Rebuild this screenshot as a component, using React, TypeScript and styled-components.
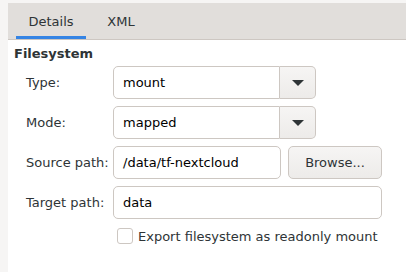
import React from 'react';
import styled, { createGlobalStyle } from 'styled-components';

const GlobalStyle = createGlobalStyle`
  html, body {
    margin: 0;
    padding: 0;
    background: #f6f5f4;
  }
  body {
    font-family: 'DejaVu Sans', 'Noto Sans', sans-serif;
    font-size: 13px;
    color: #2e3436;
  }
`;

const Window = styled.div`
  width: 406px;
  height: 272px;
  padding: 3px 0 0 8px;
  box-sizing: border-box;
  display: flex;
  flex-direction: column;
  overflow: hidden;
`;

const TabBar = styled.div`
  display: flex;
  height: 36px;
  padding-left: 8px;
  background: #e1dedb;
  border-bottom: 1px solid #cdc7c2;
  flex-shrink: 0;
`;

const Tab = styled.div<{ $active?: boolean }>`
  width: 70px;
  display: flex;
  align-items: center;
  justify-content: center;
  box-sizing: border-box;
  padding-top: ${(p) => (p.$active ? '3px' : '0')};
  border-bottom: ${(p) => (p.$active ? '3px solid #3584e4' : 'none')};
  color: #2e3436;
`;

const Page = styled.div`
  flex: 1;
  background: #ffffff;
  padding: 6px 0 0 6px;
`;

const SectionTitle = styled.div`
  font-weight: 700;
  line-height: 16px;
  margin-bottom: 4px;
`;

const Form = styled.div`
  display: grid;
  grid-template-columns: 87px 269px;
  row-gap: 7px;
  padding-left: 12px;
`;

const Label = styled.div`
  display: flex;
  align-items: center;
  height: 33px;
`;

const Field = styled.div`
  display: flex;
  gap: 7px;
`;

const Entry = styled.div<{ $width: number }>`
  width: ${(p) => p.$width}px;
  height: 33px;
  box-sizing: border-box;
  border: 1px solid #cdc7c2;
  border-radius: 5px;
  background: #fff;
  padding: 0 9px;
  display: flex;
  align-items: center;
  color: #000;
`;

const Combo = styled.div`
  width: 203px;
  height: 33px;
  display: flex;
`;

const ComboEntry = styled(Entry)`
  border-radius: 5px 0 0 5px;
`;

const ComboButton = styled.div`
  width: 36px;
  box-sizing: border-box;
  border: 1px solid #cdc7c2;
  border-left: none;
  border-radius: 0 5px 5px 0;
  background: linear-gradient(#f6f5f4, #edebe9);
  display: flex;
  align-items: center;
  justify-content: center;
`;

const Button = styled.div`
  width: 94px;
  height: 33px;
  box-sizing: border-box;
  border: 1px solid #cdc7c2;
  border-radius: 5px;
  background: linear-gradient(#f6f5f4, #edebe9);
  display: flex;
  align-items: center;
  justify-content: center;
  color: #2e3436;
`;

const CheckRow = styled.div`
  display: flex;
  align-items: center;
  gap: 5px;
  margin-top: 2px;
  padding-left: 4px;
`;

const CheckBox = styled.div`
  width: 16px;
  height: 16px;
  box-sizing: border-box;
  border: 1px solid #cdc7c2;
  border-radius: 3px;
  background: #fff;
`;

function Arrow() {
  return (
    <svg width="12" height="6" viewBox="0 0 12 6">
      <path d="M0 0 H12 L6 6 Z" fill="#2e3436" />
    </svg>
  );
}

export default function App() {
  return (
    <>
      <GlobalStyle />
      <Window>
        <TabBar>
          <Tab $active>Details</Tab>
          <Tab>XML</Tab>
        </TabBar>
        <Page>
          <SectionTitle>Filesystem</SectionTitle>
          <Form>
            <Label>Type:</Label>
            <Combo>
              <ComboEntry $width={167}>mount</ComboEntry>
              <ComboButton>
                <Arrow />
              </ComboButton>
            </Combo>
            <Label>Mode:</Label>
            <Combo>
              <ComboEntry $width={167}>mapped</ComboEntry>
              <ComboButton>
                <Arrow />
              </ComboButton>
            </Combo>
            <Label>Source path:</Label>
            <Field>
              <Entry $width={168}>/data/tf-nextcloud</Entry>
              <Button>Browse...</Button>
            </Field>
            <Label>Target path:</Label>
            <Entry $width={269}>data</Entry>
            <div />
            <CheckRow>
              <CheckBox />
              <span>Export filesystem as readonly mount</span>
            </CheckRow>
          </Form>
        </Page>
      </Window>
    </>
  );
}
